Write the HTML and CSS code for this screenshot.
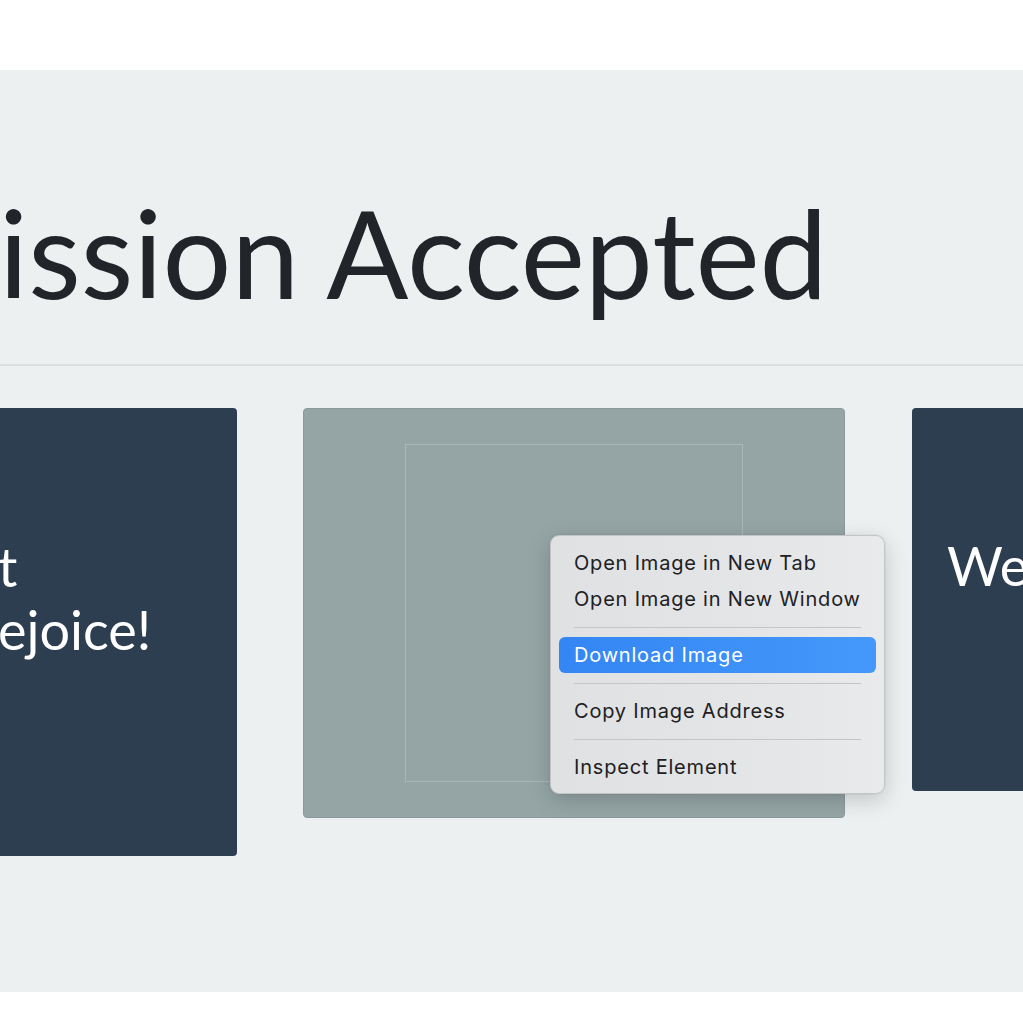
FILE: index.html
```html
<!DOCTYPE html>
<html lang="en">
<head>
<meta charset="utf-8">
<title>Submission Accepted</title>
<link rel="stylesheet" href="styles.css">
</head>
<body>
<div class="top-band"></div>
<main class="stage">
  <h1 class="title">ission Accepted</h1>
  <hr class="rule">
  <div class="cards">
    <div class="card card-dark card-left">
      <p class="card-text">t<br>ejoice!</p>
    </div>
    <div class="card card-image">
      <div class="image-frame"></div>
    </div>
    <div class="card card-dark card-right">
      <p class="card-text">We</p>
    </div>
  </div>
</main>
<div class="bottom-band"></div>

<div class="context-menu">
  <div class="menu-item">Open Image in New Tab</div>
  <div class="menu-item">Open Image in New Window</div>
  <div class="menu-sep"></div>
  <div class="menu-item active">Download Image</div>
  <div class="menu-sep"></div>
  <div class="menu-item">Copy Image Address</div>
  <div class="menu-sep"></div>
  <div class="menu-item">Inspect Element</div>
</div>
</body>
</html>
```

FILE: styles.css
```css
html, body {
  margin: 0;
  padding: 0;
  background: #ffffff;
}
body {
  width: 1023px;
  height: 1015px;
  overflow: hidden;
  position: relative;
  font-family: Lato, "Noto Sans", sans-serif;
}
.top-band {
  height: 70px;
  background: #ffffff;
}
.stage {
  height: 922px;
  background: #ecf0f1;
  padding-top: 109px;
  box-sizing: border-box;
  overflow: hidden;
}
.title {
  margin: 0 0 0 -1px;
  font-family: Lato, sans-serif;
  font-weight: 400;
  font-size: 121.5px;
  line-height: 146px;
  color: #212529;
  white-space: nowrap;
}
.rule {
  margin: 39px 0 0 0;
  border: 0;
  border-top: 2px solid #dcdfe1;
  height: 0;
}
.cards {
  display: flex;
  gap: 66px;
  margin-top: 42px;
  align-items: flex-start;
}
.card {
  border-radius: 4px;
  flex: none;
  box-sizing: border-box;
}
.card-dark {
  background: #2c3e50;
  color: #ffffff;
}
.card-left {
  width: 237px;
  height: 448px;
  border-radius: 0 4px 4px 0;
  padding-top: 127px;
}
.card-right {
  width: 140px;
  height: 383px;
  margin-left: 1px;
  padding: 126px 0 0 35px;
  border-radius: 4px 0 0 4px;
}
.card-text {
  margin: 0;
  font-family: Lato, sans-serif;
  font-size: 54px;
  line-height: 63px;
  white-space: nowrap;
}
.card-left .card-text {
  margin-left: -2px;
}
.card-image {
  width: 542px;
  height: 410px;
  background: #95a5a6;
  border: 1px solid #8a9a9b;
  display: flex;
  align-items: center;
  justify-content: center;
}
.image-frame {
  width: 338px;
  height: 338px;
  box-sizing: border-box;
  border: 1px solid #aab6b7;
}
.bottom-band {
  height: 23px;
  background: #ffffff;
}
.context-menu {
  position: absolute;
  left: 550px;
  top: 535px;
  width: 335px;
  box-sizing: border-box;
  padding: 9px 8px 8px;
  background: linear-gradient(90deg, #e0e1e3 0%, #e4e5e7 60%, #e9eaec 100%);
  border: 1px solid #c3c4c6;
  border-radius: 9px;
  box-shadow: 0 6px 22px rgba(0, 0, 0, 0.18), 0 0 2px rgba(0, 0, 0, 0.12);
  font-family: Inter, "Noto Sans", sans-serif;
  font-size: 20px;
  letter-spacing: 0.8px;
  color: #202022;
}
.menu-item {
  height: 36px;
  line-height: 36px;
  padding-left: 15px;
  border-radius: 6px;
  white-space: nowrap;
}
.menu-item.active {
  background: linear-gradient(90deg, #3486f4 0%, #3d91f7 60%, #4598fb 100%);
  color: #ffffff;
}
.menu-sep {
  height: 20px;
  display: flex;
  align-items: center;
  padding: 0 15px;
}
.menu-sep::before {
  content: "";
  flex: 1;
  height: 1px;
  background: #c4c5c7;
}
```
